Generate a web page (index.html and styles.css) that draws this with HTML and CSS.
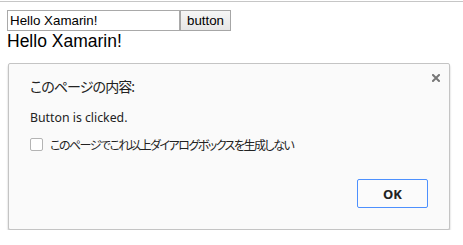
FILE: index.html
```html
<!DOCTYPE html>
<html lang="ja">
<head>
  <meta charset="UTF-8">
  <meta name="viewport" content="width=device-width, initial-scale=1.0">
  <title>Hello Xamarin</title>
  <link rel="stylesheet" href="styles.css">
</head>
<body>
  <div class="top-line"></div>
  <div class="form-row">
    <input class="text-input" type="text" value="Hello Xamarin!">
    <button class="plain-button">button</button>
  </div>
  <div class="greeting">Hello Xamarin!</div>

  <!-- alert dialog -->
  <div class="dialog">
    <span class="close">
      <svg width="8" height="8" viewBox="0 0 8 8"><path d="M1 1L7 7M7 1L1 7" stroke="#777" stroke-width="2" stroke-linecap="square"/></svg>
    </span>
    <div class="dialog-title">このページの内容:</div>
    <div class="dialog-message">Button is clicked.</div>
    <label class="dialog-check"><span class="check-box"></span><span class="check-text">このページでこれ以上ダイアログボックスを生成しない</span></label>
    <div class="dialog-footer">
      <button class="ok-button">OK</button>
    </div>
  </div>
</body>
</html>
```

FILE: styles.css
```css
body {
  margin: 0;
  font-family: "Liberation Sans", Arial, sans-serif;
  background-color: #fff;
  color: #000;
}
.top-line {
  margin-top: 1px;
  height: 1px;
  background-color: #c6c6c6;
}
.form-row {
  display: flex;
  margin: 8px 0 0 7px;
  height: 21px;
}
.text-input {
  box-sizing: border-box;
  width: 173px;
  height: 21px;
  margin: 0;
  padding: 0 2px;
  border: 1px solid #a9a9a9;
  font-family: "Liberation Sans", Arial, sans-serif;
  font-size: 13.33px;
  color: #000;
}
.plain-button {
  box-sizing: border-box;
  width: 51px;
  height: 21px;
  margin: 0;
  padding: 0;
  border: 1px solid #a6a6a6;
  background: linear-gradient(#f6f6f6, #e6e6e6);
  font-family: "Liberation Sans", Arial, sans-serif;
  font-size: 13.33px;
  color: #000;
}
.greeting {
  margin-left: 7px;
  font-size: 17.5px;
  line-height: 20px;
}
.dialog {
  position: relative;
  box-sizing: border-box;
  width: 442px;
  margin: 12px 0 0 8px;
  padding: 13px 21px 21px 21px;
  background-color: #fafafa;
  border: 1px solid #c4c4c4;
  border-radius: 2px;
  box-shadow: 0 2px 2px rgba(0, 0, 0, 0.25);
  font-family: "Noto Sans", "Noto Sans CJK JP", sans-serif;
  font-feature-settings: "palt";
  color: #222;
}
.close {
  position: absolute;
  top: 10px;
  right: 9px;
  width: 8px;
  height: 8px;
  display: flex;
}
.dialog-title {
  font-size: 14px;
  line-height: 20px;
  letter-spacing: -0.9px;
}
.dialog-message {
  margin-top: 13px;
  font-size: 12.3px;
  line-height: 16px;
}
.dialog-check {
  display: flex;
  align-items: center;
  gap: 7px;
  margin-top: 10px;
  height: 17px;
  font-size: 12px;
}
.check-text {
  letter-spacing: -1.5px;
}
.check-box {
  box-sizing: border-box;
  width: 13px;
  height: 13px;
  border: 1px solid #b4b4b4;
  border-radius: 2px;
  background-color: #fff;
}
.dialog-footer {
  display: flex;
  justify-content: flex-end;
  margin-top: 26px;
}
.ok-button {
  box-sizing: border-box;
  width: 71px;
  height: 29px;
  margin: 0;
  border: 1px solid #4d90fe;
  border-radius: 2px;
  background-color: #fbfbfb;
  font-family: "Noto Sans", sans-serif;
  font-size: 13px;
  font-weight: bold;
  color: #222;
}
```
